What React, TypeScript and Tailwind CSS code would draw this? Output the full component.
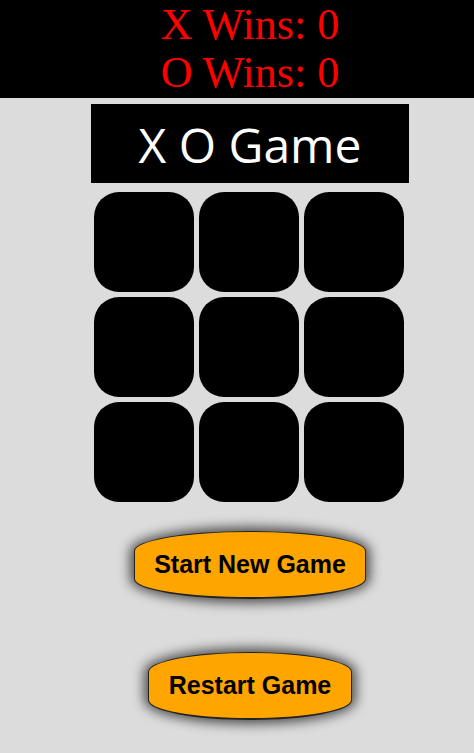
import React from "react";

export default function App() {
  const cells = Array.from({ length: 9 });
  return (
    <div className="min-h-[753px] bg-[#dcdcdc] flex flex-col">
      <div className="bg-black h-[98px] flex flex-col items-center pl-[26px] text-[#ff0000] text-[44px] leading-[48px] pt-[1px]" style={{ fontFamily: '"Liberation Serif", serif' }}>
        <div>X Wins: 0</div>
        <div>O Wins: 0</div>
      </div>
      <div className="flex flex-col items-center pl-[26px]">
        <div className="mt-[6px] w-[318px] h-[79px] bg-black text-white flex items-center justify-center text-[48px] pt-[3px]" style={{ fontFamily: '"Open Sans", sans-serif' }}>
          X O Game
        </div>
        <div className="mt-[9px] -ml-[2px] grid grid-cols-[repeat(3,100px)] gap-[5px]">
          {cells.map((_, i) => (
            <div key={i} className="w-[100px] h-[100px] bg-black rounded-[25px]" />
          ))}
        </div>
        <button className="mt-[29px] w-[232px] h-[68px] bg-[#ffa500] border border-[#222] border-b-2 rounded-[50%/20px] shadow-[0_0_12px_4px_rgba(0,0,0,0.65)] text-[25px] font-bold text-black" style={{ fontFamily: '"Liberation Sans", Arial, sans-serif' }}>
          Start New Game
        </button>
        <button className="mt-[53px] w-[204px] h-[68px] bg-[#ffa500] border border-[#222] border-b-2 rounded-[50%/20px] shadow-[0_0_12px_4px_rgba(0,0,0,0.65)] text-[25px] font-bold text-black" style={{ fontFamily: '"Liberation Sans", Arial, sans-serif' }}>
          Restart Game
        </button>
      </div>
    </div>
  );
}
